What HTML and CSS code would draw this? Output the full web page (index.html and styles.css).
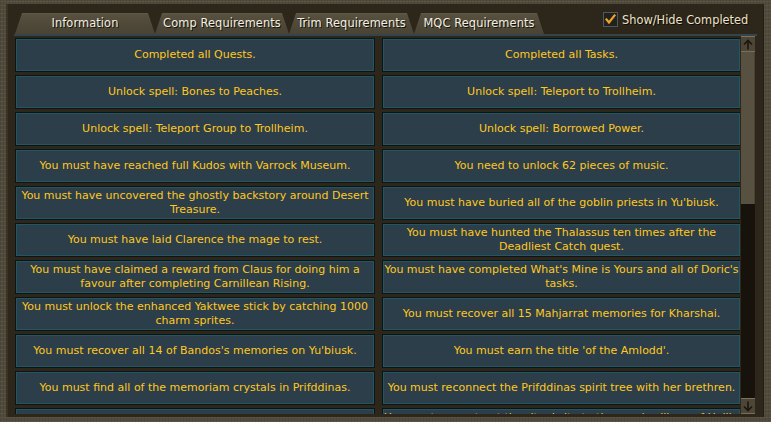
FILE: index.html
```html
<!DOCTYPE html>
<html>
<head>
<meta charset="utf-8">
<link rel="stylesheet" href="styles.css">
</head>
<body>
<div class="frame">
  <div class="header">
    <div class="tabs">
      <div class="tab t1">Information</div>
      <div class="tab t2">Comp Requirements</div>
      <div class="tab t3">Trim Requirements</div>
      <div class="tab t4">MQC Requirements</div>
    </div>
    <div class="toggle">
      <span class="box"><svg width="13" height="13" viewBox="0 0 13 13"><path d="M2.5 6.5 L5 9.5 L10.5 2.5" fill="none" stroke="#f0a428" stroke-width="2.2" stroke-linecap="square"/></svg></span>
      <span class="toggle-label">Show/Hide Completed</span>
    </div>
  </div>
  <div class="panel">
    <div class="list">
      <div class="cell">Completed all Quests.</div>
      <div class="cell">Completed all Tasks.</div>
      <div class="cell">Unlock spell: Bones to Peaches.</div>
      <div class="cell">Unlock spell: Teleport to Trollheim.</div>
      <div class="cell">Unlock spell: Teleport Group to Trollheim.</div>
      <div class="cell">Unlock spell: Borrowed Power.</div>
      <div class="cell">You must have reached full Kudos with Varrock Museum.</div>
      <div class="cell">You need to unlock 62 pieces of music.</div>
      <div class="cell">You must have uncovered the ghostly backstory around Desert<br>Treasure.</div>
      <div class="cell">You must have buried all of the goblin priests in Yu'biusk.</div>
      <div class="cell">You must have laid Clarence the mage to rest.</div>
      <div class="cell">You must have hunted the Thalassus ten times after the<br>Deadliest Catch quest.</div>
      <div class="cell">You must have claimed a reward from Claus for doing him a<br>favour after completing Carnillean Rising.</div>
      <div class="cell">You must have completed What's Mine is Yours and all of Doric's<br>tasks.</div>
      <div class="cell">You must unlock the enhanced Yaktwee stick by catching 1000<br>charm sprites.</div>
      <div class="cell">You must recover all 15 Mahjarrat memories for Kharshai.</div>
      <div class="cell">You must recover all 14 of Bandos's memories on Yu'biusk.</div>
      <div class="cell">You must earn the title 'of the Amlodd'.</div>
      <div class="cell">You must find all of the memoriam crystals in Prifddinas.</div>
      <div class="cell">You must reconnect the Prifddinas spirit tree with her brethren.</div>
      <div class="cell">You must have completed the Elf City quest.</div>
      <div class="cell">You must reconstruct the ritual site to the seer's village of Hallia<br>and reunite the elders.</div>
    </div>
    <div class="scrollbar">
      <div class="sbtn"><svg width="14" height="15" viewBox="0 0 14 15"><path d="M7 3.5 V12.5 M3 7.5 L7 3.5 L11 7.5" fill="none" stroke="#1a1610" stroke-width="1.6"/></svg></div>
      <div class="thumb"></div>
      <div class="track"></div>
      <div class="sbtn"><svg width="14" height="15" viewBox="0 0 14 15"><path d="M7 2.5 V11.5 M3 7.5 L7 11.5 L11 7.5" fill="none" stroke="#1a1610" stroke-width="1.6"/></svg></div>
    </div>
  </div>
</div>
</body>
</html>
```
FILE: styles.css
```css
* { box-sizing: border-box; }
html, body { margin: 0; padding: 0; }
body {
  width: 771px;
  height: 422px;
  overflow: hidden;
  background: #514b3c;
  background-image:
    repeating-linear-gradient(90deg, rgba(0,0,0,0.08) 0 1px, transparent 1px 3px),
    repeating-linear-gradient(0deg, rgba(255,255,255,0.05) 0 1px, transparent 1px 4px);
  font-family: "DejaVu Sans", Verdana, sans-serif;
}
.frame {
  margin: 4px 7px 0 6px;
  height: 413px;
  background: #2c261b;
  border-left: 2px solid #3a3224;
  border-right: 1px solid #241e14;
  display: flex;
  flex-direction: column;
}
.header {
  height: 30px;
  display: flex;
  align-items: flex-end;
  flex-shrink: 0;
}
.tabs {
  display: flex;
  margin-left: 7px;
  height: 21px;
}
.tab {
  height: 21px;
  clip-path: polygon(7px 0, calc(100% - 7px) 0, 100% 100%, 0 100%);
  background: linear-gradient(#5f5948 0, #57503f 2px, #4e4838 60%, #4a4435 100%);
  color: #f2eee2;
  font-size: 11.4px;
  line-height: 21px;
  text-align: center;
  text-shadow: 1px 1px 0 #151209;
  letter-spacing: 0.1px;
}
.t1 { width: 140px; }
.t2 { width: 134px; }
.t3 { width: 125px; }
.t4 { width: 130px; }
.toggle {
  align-self: flex-start;
  margin-top: 8px;
  margin-left: 59px;
  display: flex;
  align-items: center;
  gap: 4px;
}
.box {
  width: 15px;
  height: 15px;
  border: 1px solid #4e5860;
  background: #22211d;
  display: flex;
  align-items: center;
  justify-content: center;
}
.toggle-label {
  color: #ece2c8;
  font-size: 11.4px;
  text-shadow: 1px 1px 0 #0e0b06;
}
.panel {
  flex: 1;
  margin: 0 6px 3px 6px;
  border-top: 2px solid #35434b;
  padding: 0 2px 2px 1px;
  display: flex;
  gap: 1px;
  min-height: 0;
}
.list {
  width: 726px;
  height: 378px;
  overflow: hidden;
  padding-top: 2px;
  display: grid;
  grid-template-columns: 360px 359px;
  grid-auto-rows: 34px;
  column-gap: 7px;
  row-gap: 3px;
  align-content: start;
}
.cell {
  background: #2c3e4a;
  border: 1px solid #101315;
  box-shadow: inset 0 0 0 1px #1f5862;
  color: #ffc81e;
  font-size: 11px;
  line-height: 14px;
  white-space: nowrap;
  overflow: hidden;
  display: flex;
  align-items: center;
  justify-content: center;
  text-align: center;
  padding: 0 1px;
}
.scrollbar {
  width: 14px;
  height: 378px;
  display: flex;
  flex-direction: column;
}
.sbtn {
  height: 16px;
  background: #4d4536;
  border-top: 1px solid #7b715d;
  border-bottom: 1px solid #786e5a;
  display: flex;
  align-items: center;
  justify-content: center;
  flex-shrink: 0;
}
.thumb {
  height: 152px;
  background: #585040;
  border-right: 1px solid #4a4233;
  flex-shrink: 0;
}
.track {
  flex: 1;
  background: #17120b;
}
```
